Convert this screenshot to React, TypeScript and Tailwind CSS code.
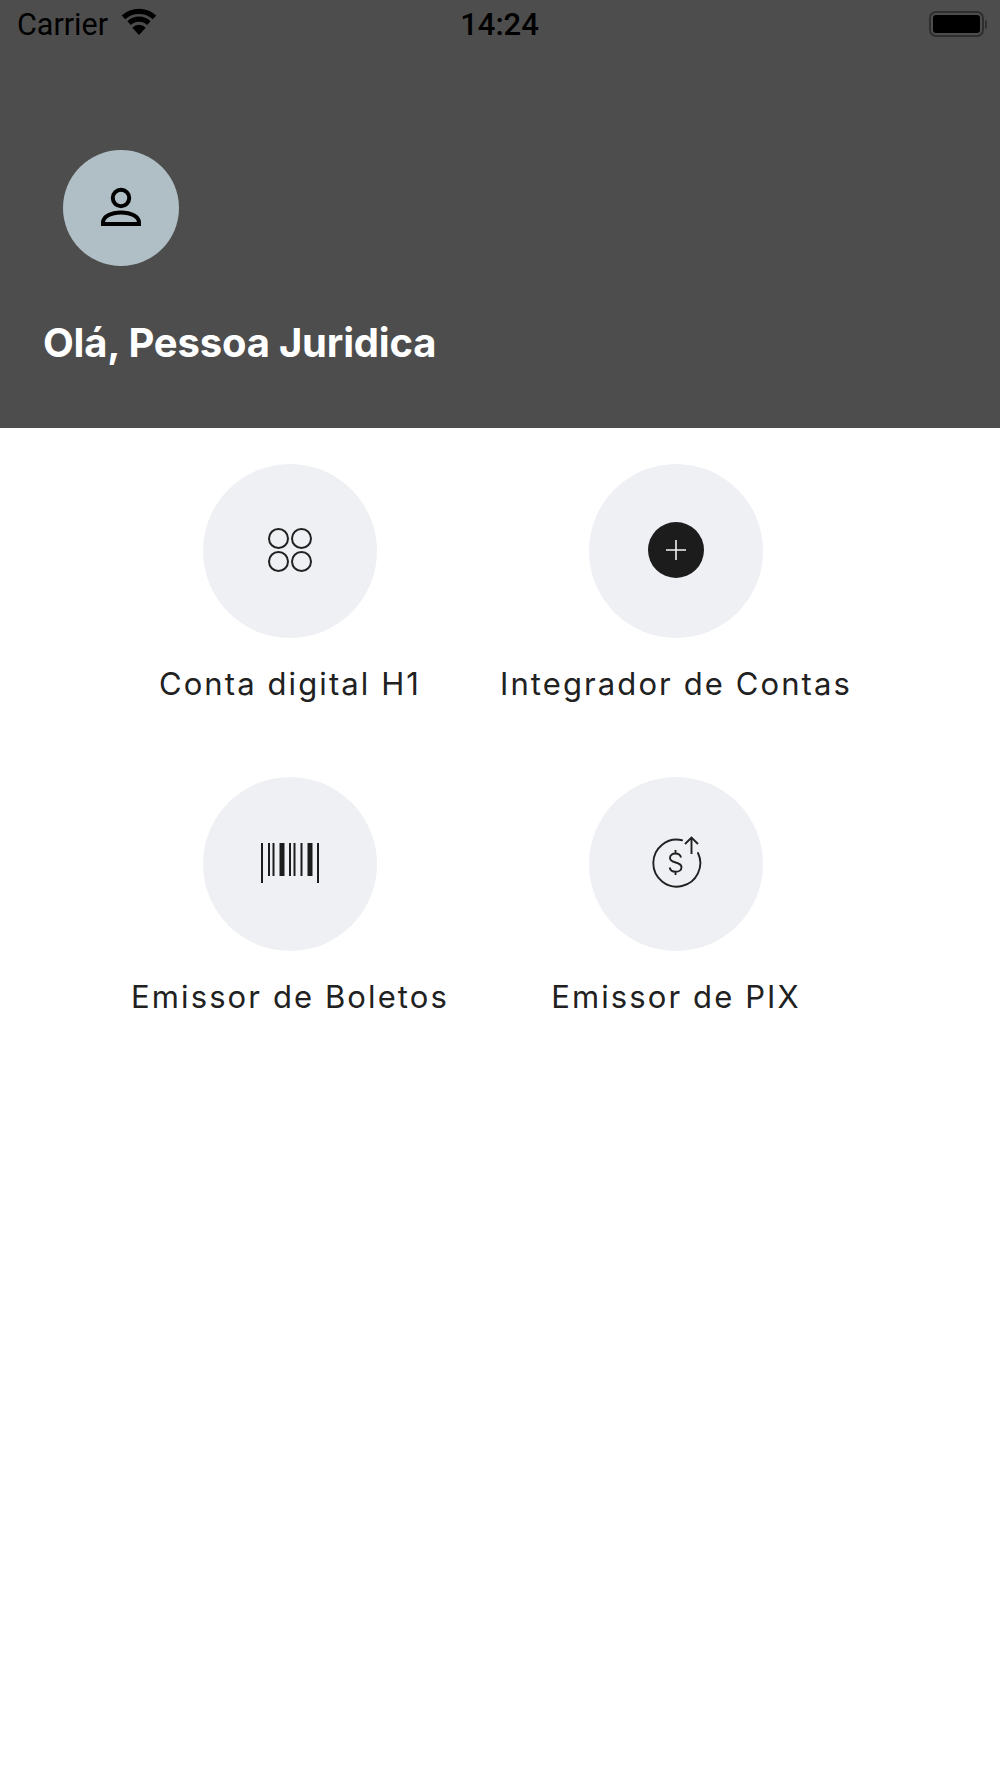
import React from "react";

function Tile({ label, children }: { label: string; children: React.ReactNode }) {
  return (
    <div className="flex flex-col items-center">
      <div className="flex h-[174px] w-[174px] items-center justify-center rounded-full bg-[#eff0f4] pb-[2px]">{children}</div>
      <div className="mt-[26px] whitespace-nowrap text-[31px] leading-[40px] tracking-[2.1px] text-[#212121]">{label}</div>
    </div>
  );
}

export default function App() {
  return (
    <div className="h-[1778px] w-[1000px] bg-white font-['Inter','Liberation_Sans',sans-serif]">
      <header className="h-[428px] bg-[#4d4d4d]">
        <div className="flex h-[50px] items-start justify-between pl-[17px] pr-[13px] pt-[8px] font-['Roboto','Liberation_Sans',sans-serif] text-black">
          <div className="flex w-[160px] items-center gap-[12px]">
            <span className="text-[30.5px] leading-[34px]">Carrier</span>
            <svg width="38" height="29" viewBox="0 0 36 28" className="-mt-[8px] shrink-0">
              <path d="M18 27 11.5 20a9 9 0 0 1 13 0z" fill="#000" />
              <path d="M3 10a22.5 22.5 0 0 1 30 0" fill="none" stroke="#000" strokeWidth="5" />
              <path d="M8.5 15.5a14 14 0 0 1 19 0" fill="none" stroke="#000" strokeWidth="5" />
            </svg>
          </div>
          <span className="pr-[5px] text-[31px] font-medium leading-[34px]">14:24</span>
          <div className="flex w-[160px] items-center justify-end pt-[3px]">
            <div className="flex h-[26px] w-[55px] items-center justify-center rounded-[7px] border-2 border-[#2e2e2e]">
              <div className="h-[18px] w-[47px] rounded-[3px] bg-black" />
            </div>
            <div className="ml-[1px] h-[9px] w-[2px] rounded-r-sm bg-[#2e2e2e]" />
          </div>
        </div>
        <div className="ml-[63px] mt-[100px] flex h-[116px] w-[116px] items-center justify-center rounded-full bg-[#b0bec5]">
          <svg width="44" height="44" viewBox="0 0 44 44" fill="none" stroke="#000" strokeWidth="4">
            <circle cx="22" cy="12" r="8.2" />
            <path d="M4 38h36v-1.5c0-6-8-10-18-10S4 30.500 4 36.500z" />
          </svg>
        </div>
        <h1 className="ml-[43px] mt-[49px] whitespace-nowrap text-[40px] font-bold leading-[56px] tracking-[-0.2px] text-white">Olá, Pessoa Juridica</h1>
      </header>
      <main className="ml-[97px] mt-[36px] grid w-[772px] grid-cols-2 gap-y-[73px]">
        <Tile label="Conta digital H1">
          <svg width="46" height="46" viewBox="0 0 46 46" fill="none" stroke="#212121" strokeWidth="2">
            <circle cx="11.500" cy="11.500" r="9.500" />
            <circle cx="34.500" cy="11.500" r="9.500" />
            <circle cx="11.500" cy="34.500" r="9.500" />
            <circle cx="34.500" cy="34.500" r="9.500" />
          </svg>
        </Tile>
        <Tile label="Integrador de Contas">
          <svg width="56" height="56" viewBox="0 0 56 56">
            <circle cx="28" cy="28" r="28" fill="#1c1c1c" />
            <path d="M28 18v20M18 28h20" stroke="#f2f2f2" strokeWidth="1.6" />
          </svg>
        </Tile>
        <Tile label="Emissor de Boletos">
          <svg width="60" height="40" viewBox="0 0 60 40" fill="#1c1c1c">
            <rect x="1" y="0" width="2" height="40" />
            <rect x="8" y="0" width="2" height="33" />
            <rect x="12.500" y="0" width="2" height="33" />
            <rect x="19.500" y="0" width="5" height="33" />
            <rect x="29" y="0" width="2" height="33" />
            <rect x="33.500" y="0" width="2" height="33" />
            <rect x="40.500" y="0" width="2" height="33" />
            <rect x="47.500" y="0" width="5" height="33" />
            <rect x="57" y="0" width="2" height="40" />
          </svg>
        </Tile>
        <Tile label="Emissor de PIX">
          <svg width="52" height="52" viewBox="0 0 52 52" fill="none" stroke="#212121" strokeWidth="1.9" className="mb-[2px]">
            <path d="M32 4.200A23.500 23.500 0 1 0 48 17" strokeLinecap="round" />
            <path d="M41.500 1.500V18M35 8l6.500-6.500L48 8" />
            <path d="M31 21.500c-.6-2.600-2.600-4-5.500-4-3.200 0-5.500 1.800-5.500 4.500 0 6 11.500 3 11.500 9.200 0 2.800-2.500 4.600-5.800 4.600-3.200 0-5.500-1.600-6-4.300M25.500 14v3.500M25.500 35.800v3.200" />
          </svg>
        </Tile>
      </main>
    </div>
  );
}
